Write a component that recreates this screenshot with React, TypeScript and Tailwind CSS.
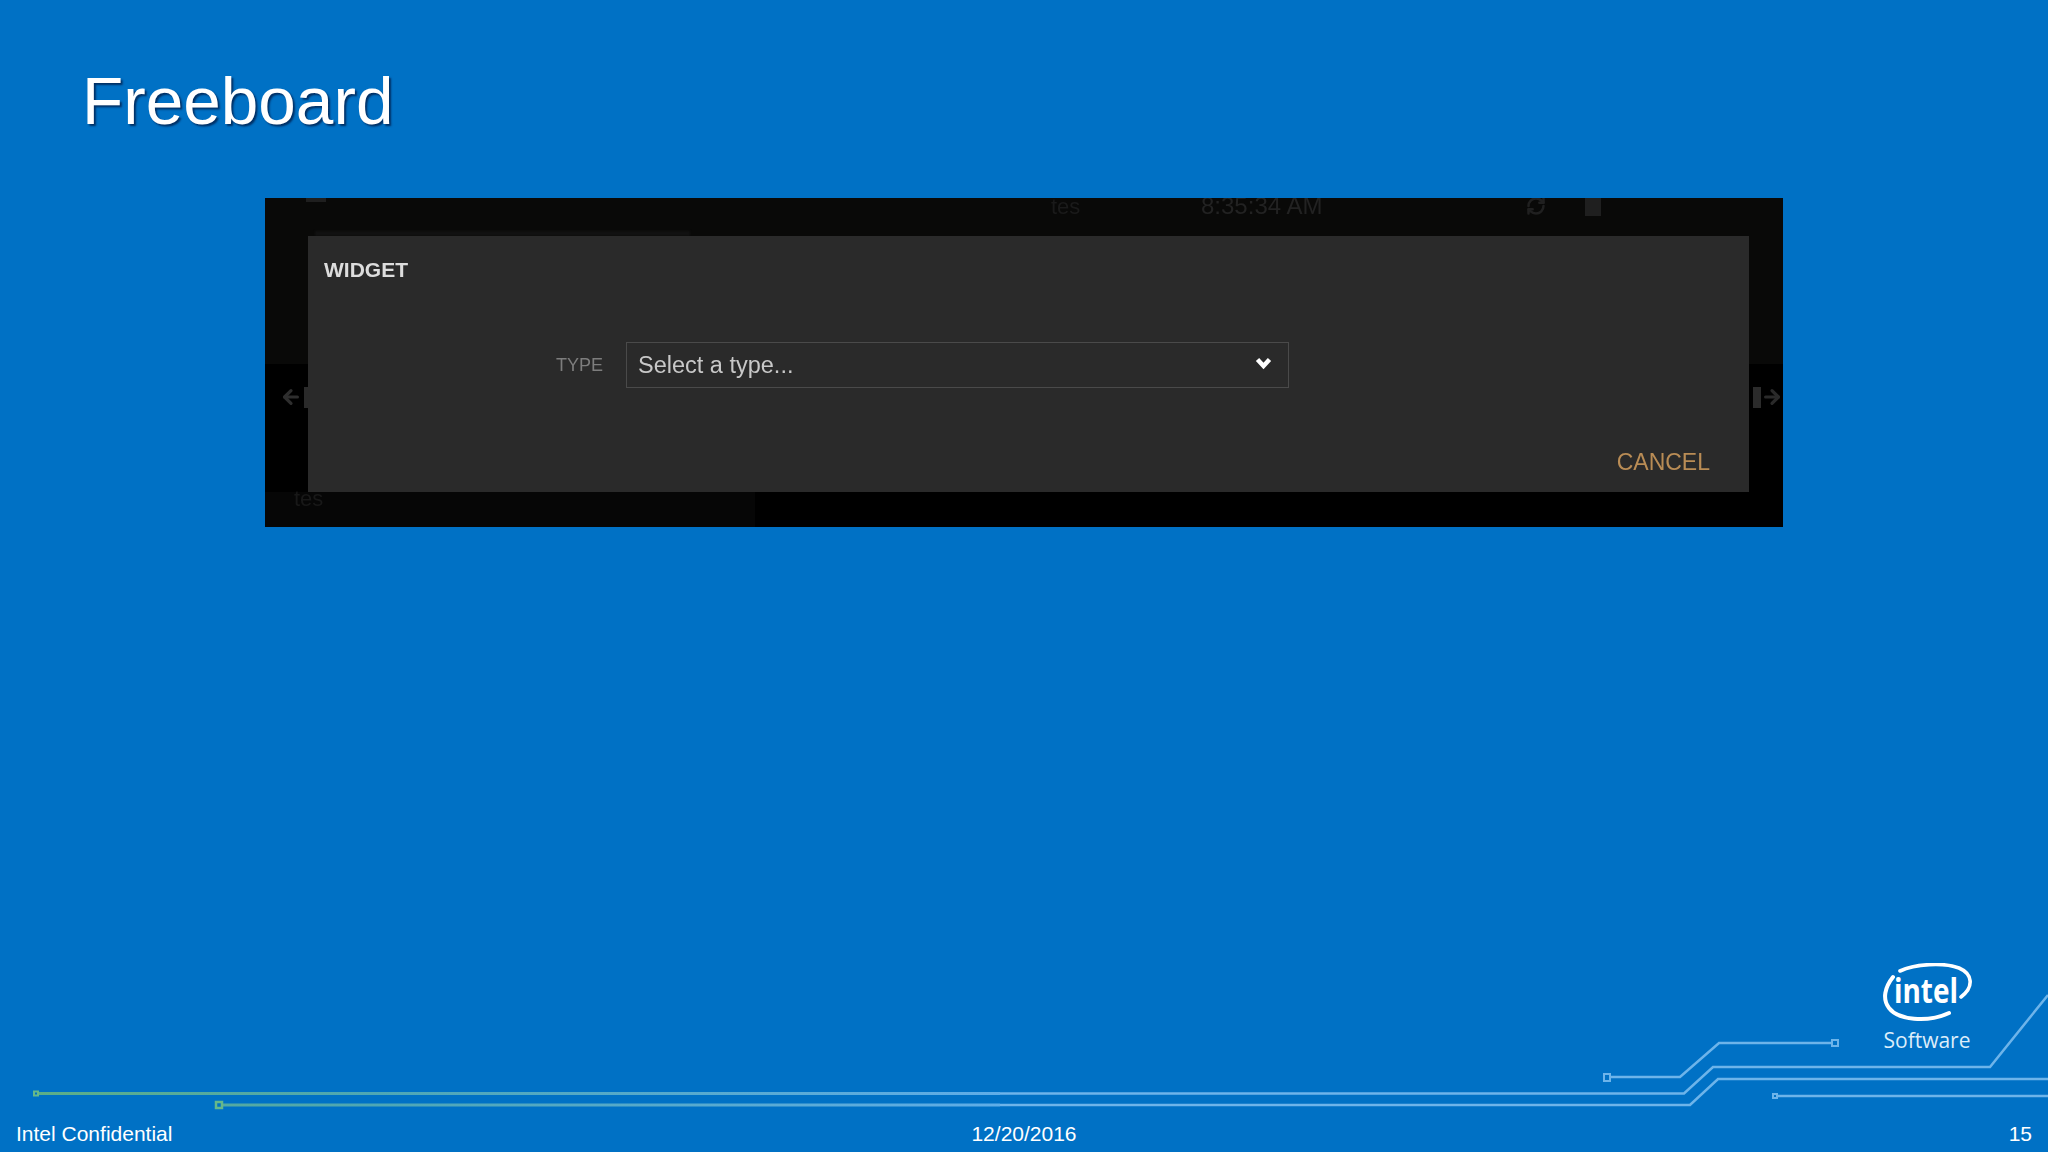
import React from 'react';
import { ArrowLeft, ArrowRight, RefreshCw } from 'lucide-react';

const sans = "font-['Liberation_Sans',Arial,sans-serif]";

// Circuit traces along the bottom of the slide
const CircuitLines = () => (
  <svg className="absolute left-0 top-0 pointer-events-none" width="2048" height="1152" viewBox="0 0 2048 1152" fill="none">
    <defs>
      <linearGradient id="trace" gradientUnits="userSpaceOnUse" x1="30" y1="0" x2="1000" y2="0">
        <stop offset="0" stopColor="#5cae86" />
        <stop offset="0.35" stopColor="#4ea7b4" />
        <stop offset="1" stopColor="#5fade8" />
      </linearGradient>
    </defs>
    <g stroke="#6db4ea" strokeWidth="2.5">
      <path d="M1832 1043H1719L1680 1077H1611" />
      <rect x="1832" y="1040" width="6" height="6" strokeWidth="2" />
      <rect x="1604" y="1074" width="6" height="7" strokeWidth="2" />
      <path d="M1000 1093.5H1684L1713 1067H1990L2048 995" />
      <path d="M1000 1105H1690L1718 1079H2048" />
      <path d="M1778 1096H2048" />
      <rect x="1773" y="1094" width="4" height="4" strokeWidth="2" />
    </g>
    <path d="M39 1093.5H1000" stroke="url(#trace)" strokeWidth="3" />
    <path d="M222 1105H1000" stroke="url(#trace)" strokeWidth="3" />
    <rect x="34" y="1091.5" width="4" height="4" stroke="#66b88a" strokeWidth="2" />
    <rect x="216" y="1102" width="6" height="6" stroke="#66b88a" strokeWidth="2.5" />
  </svg>
);

const IntelSoftware = () => (
  <div className="absolute left-[1883px] top-[963px] w-[90px] flex flex-col items-center">
    <svg width="90" height="60" viewBox="0 0 90 60" fill="none">
      <path d="M10 14C2 24 -1 36 6 45C15 57 44 60 66 50" stroke="#fff" strokeWidth="4" strokeLinecap="round" />
      <path d="M17 8C32 1 60 -1 76 5C90 11 91 24 78 34" stroke="#fff" strokeWidth="3.6" strokeLinecap="round" />
      <text x="11" y="40" fill="#fff" fontFamily="'Open Sans',sans-serif" fontWeight="700" fontSize="34" textLength="64" lengthAdjust="spacingAndGlyphs">intel</text>
    </svg>
    <span className="mt-[3px] -ml-[2px] font-['Open_Sans',sans-serif] text-[21px] leading-[28px] text-[#dcedfa]">Software</span>
  </div>
);

const ModalBackdrop = () => (
  <>
    <div className="absolute left-0 right-0 top-0 h-[166px] bg-[#090908]" />
    <div className="absolute left-0 bottom-0 w-[490px] h-[35px] bg-[#060606]" />
    <div className="absolute left-[41px] top-0 w-[20px] h-[4px] bg-[#1f1f1f]" />
    <span className={`absolute left-[786px] top-[-3px] text-[22px] leading-[24px] text-[#1a1a1a] ${sans}`}>tes</span>
    <span className={`absolute left-[936px] top-[-4px] text-[24px] leading-[24px] text-[#222222] ${sans}`}>8:35:34 AM</span>
    <RefreshCw className="absolute left-[1261px] top-[-2px] text-[#202020]" size={20} strokeWidth={3} />
    <div className="absolute left-[1320px] top-0 w-[16px] h-[18px] bg-[#1f1f1f]" />
    <div className="absolute left-[50px] top-[33px] w-[375px] h-[5px] bg-[#111111] blur-[1px]" />
    <ArrowLeft className="absolute left-[15px] top-[188px] text-[#2e2e2e]" size={22} strokeWidth={3.5} />
    <div className="absolute left-[39px] top-[189px] w-[4px] h-[21px] bg-[#2a2a2a]" />
    <div className="absolute left-[1488px] top-[189px] w-[8px] h-[21px] bg-[#2b2b2b]" />
    <ArrowRight className="absolute left-[1496px] top-[188px] text-[#2a2a2a]" size={22} strokeWidth={3.5} />
    <span className={`absolute left-[29px] top-[289px] text-[22px] leading-[24px] text-[#181818] ${sans}`}>tes</span>
  </>
);

const WidgetModal = () => (
  <div className="relative flex-1 flex flex-col bg-[#2a2a2a] pl-[16px] pr-[39px] pt-[20px] pb-[16px]">
    <div className={`text-[21px] leading-[28px] font-bold text-[#dddddd] ${sans}`}>WIDGET</div>
    <div className="flex items-center mt-[58px] ml-[232px]">
      <label className={`w-[70px] text-[18px] leading-[24px] text-[#7d7d7d] ${sans}`}>TYPE</label>
      <div className="flex items-center justify-between w-[663px] h-[46px] border border-[#4a4a4a] pl-[11px] pr-[16px]">
        <span className={`text-[23.5px] leading-[28px] text-[#c8c8c8] ${sans}`}>Select a type...</span>
        <svg className="mb-[5px]" width="17" height="14" viewBox="0 0 17 14" fill="none">
          <path d="M2.5 3.5L8.5 10L14.5 3.5" stroke="#ffffff" strokeWidth="4.5" />
        </svg>
      </div>
    </div>
    <div className={`mt-auto self-end text-[23px] leading-[28px] text-[#b98c55] ${sans}`}>CANCEL</div>
  </div>
);

const App = () => {
  return (
    <div className={`relative flex flex-col w-[2048px] h-[1152px] overflow-hidden bg-[#0071c5] text-white ${sans}`}>
      <CircuitLines />
      <IntelSoftware />
      <h1 className="relative ml-[82px] mt-[63px] h-[135px] text-[67.5px] leading-[76px] font-normal [text-shadow:2px_2px_2px_rgba(0,20,60,0.7)]">
        Freeboard
      </h1>
      <div className="relative flex ml-[265px] w-[1518px] h-[329px] overflow-hidden bg-black pl-[43px] pr-[34px] pt-[38px] pb-[35px] blur-[0.4px]">
        <ModalBackdrop />
        <WidgetModal />
      </div>
      <footer className="relative mt-auto grid grid-cols-3 items-center px-[16px] pb-[5px] text-[21px] leading-[26px]">
        <span>Intel Confidential</span>
        <span className="text-center">12/20/2016</span>
        <span className="text-right">15</span>
      </footer>
    </div>
  );
};

export default App;
